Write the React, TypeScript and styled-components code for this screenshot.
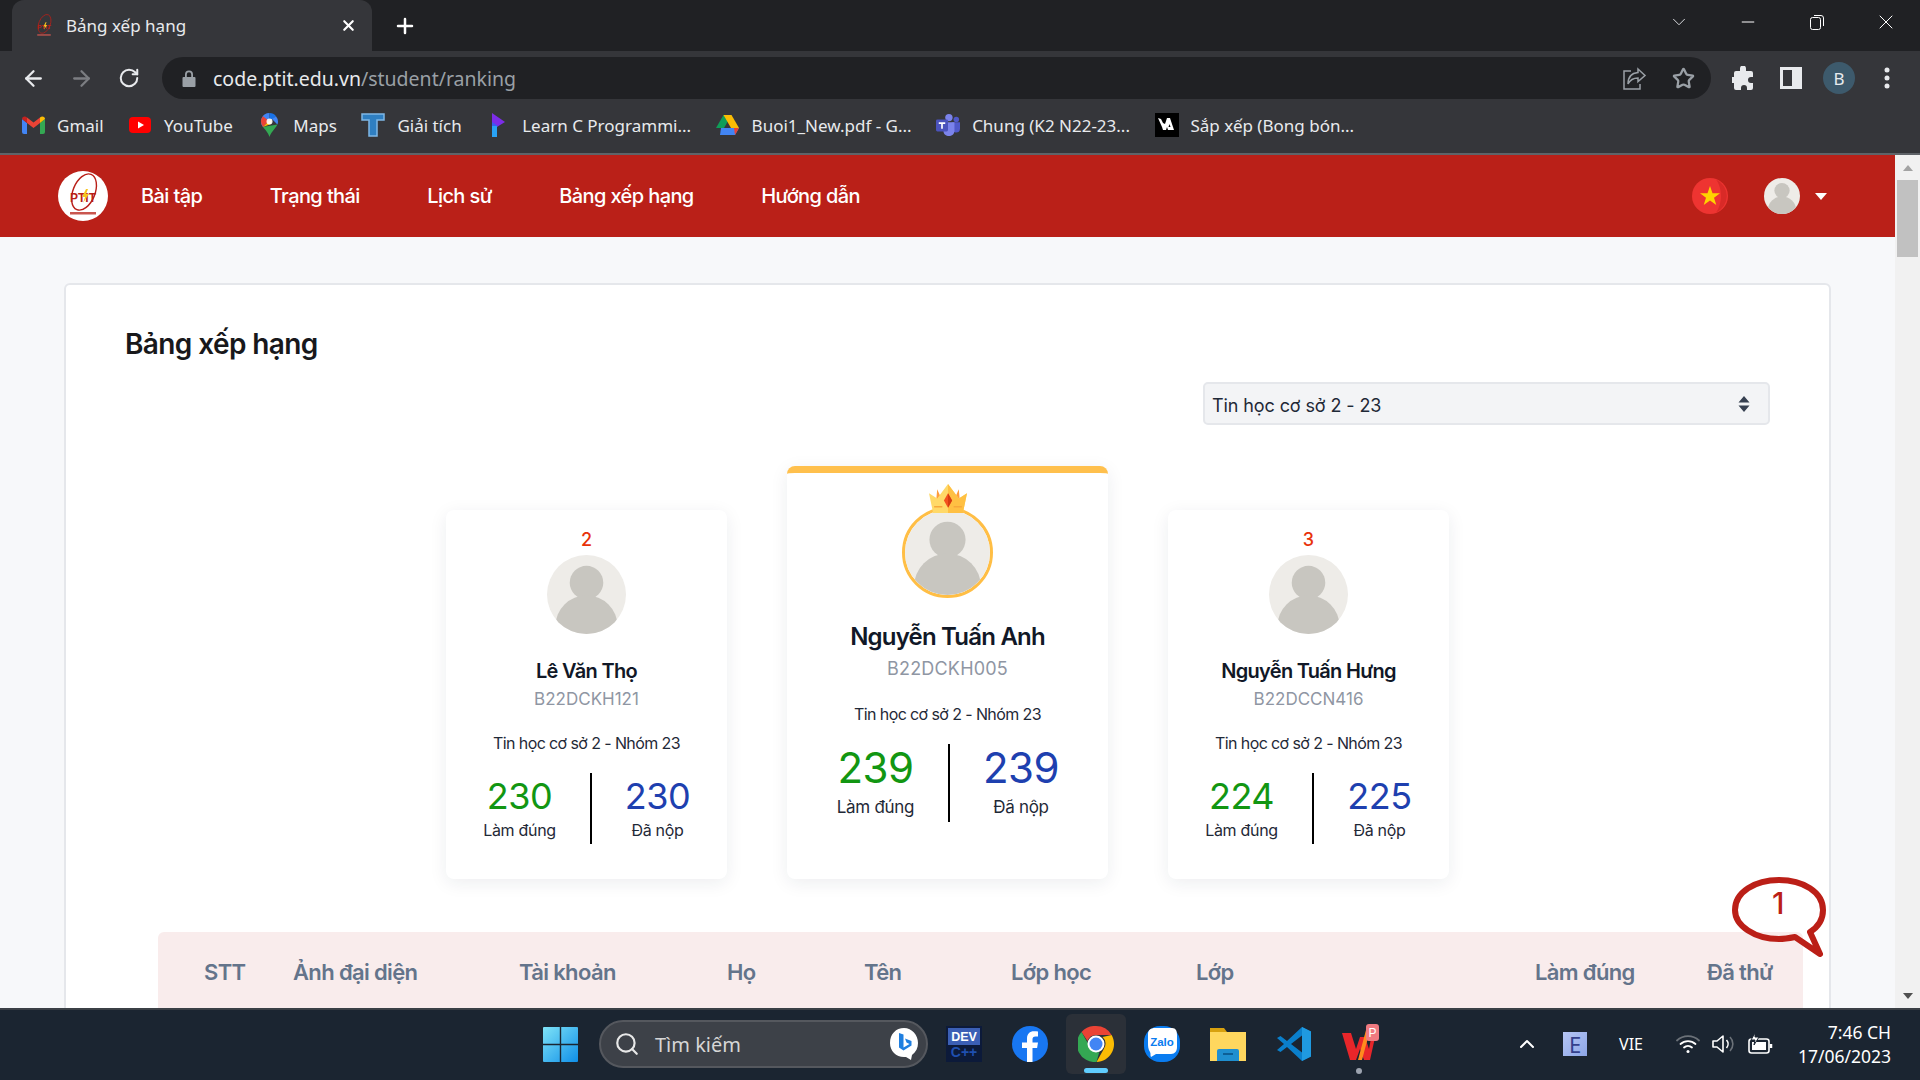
import styled, { createGlobalStyle } from 'styled-components'
import { ArrowLeft, ArrowRight, RotateCw, X, Plus, ChevronDown, Minus, Star, ChevronUp, Search } from 'lucide-react'

const GlobalStyle = createGlobalStyle`
    html,
    body {
        margin: 0;
        padding: 0;
        overflow: hidden;
    }
    * {
        box-sizing: border-box;
    }
`

const bookmarks = [
    { name: 'Gmail', icon: <GmailIcon /> },
    { name: 'YouTube', icon: <YoutubeIcon /> },
    { name: 'Maps', icon: <MapsIcon /> },
    { name: 'Giải tích', icon: <TIcon /> },
    { name: 'Learn C Programmi...', icon: <LearnIcon /> },
    { name: 'Buoi1_New.pdf - G...', icon: <DriveIcon /> },
    { name: 'Chung (K2 N22-23...', icon: <TeamsIcon /> },
    { name: 'Sắp xếp (Bong bón...', icon: <VaIcon /> },
]

const navItems = ['Bài tập', 'Trạng thái', 'Lịch sử', 'Bảng xếp hạng', 'Hướng dẫn']

const columns = [
    { title: 'STT', width: 89 },
    { title: 'Ảnh đại diện', width: 226 },
    { title: 'Tài khoản', width: 208 },
    { title: 'Họ', width: 137 },
    { title: 'Tên', width: 147 },
    { title: 'Lớp học', width: 185 },
    { title: 'Lớp', width: 339 },
    { title: 'Làm đúng', width: 172 },
    { title: 'Đã thử', width: 80 },
]

const runnersUp = {
    second: { rank: 2, name: 'Lê Văn Thọ', code: 'B22DCKH121', correct: 230, submitted: 230 },
    third: { rank: 3, name: 'Nguyễn Tuấn Hưng', code: 'B22DCCN416', correct: 224, submitted: 225 },
}

function PtitLogo({ size }: { size: number }) {
    return (
        <svg width={size} height={size} viewBox="0 0 50 50">
            <ellipse cx="26" cy="21" rx="11" ry="19" transform="rotate(22 26 21)" fill="none" stroke="#b91f18" strokeWidth="1.4" />
            <text x="25" y="31" textAnchor="middle" fontFamily="Liberation Sans, sans-serif" fontSize="12" fontWeight="700" fill="#b91f18">
                PTIT
            </text>
            <path d="M28 18l-4 8h3l-2 6 6-9h-3l2-5z" fill="#f7c520" />
            <rect x="12" y="41" width="26" height="2.5" fill="#c9564f" />
        </svg>
    )
}

function GmailIcon() {
    return (
        <svg width="23" height="18" viewBox="0 0 23 18">
            <path d="M0 3v13a2 2 0 002 2h3V7z" fill="#4285f4" />
            <path d="M23 3v13a2 2 0 01-2 2h-3V7z" fill="#34a853" />
            <path d="M5 7l6.500 5L18 7V1.500l-6.500 5-6.500-5z" fill="#ea4335" />
            <path d="M0 3c0-2.500 3-3.500 5-1.500V7L0 3z" fill="#c5221f" />
            <path d="M23 3c0-2.500-3-3.500-5-1.500V7l5-4z" fill="#fbbc04" />
        </svg>
    )
}

function YoutubeIcon() {
    return (
        <svg width="22" height="16" viewBox="0 0 22 16">
            <rect width="22" height="16" rx="4" fill="#f00" />
            <path d="M9 4.500L15 8l-6 3.500z" fill="#fff" />
        </svg>
    )
}

function MapsIcon() {
    return (
        <svg width="17" height="24" viewBox="0 0 17 24">
            <path d="M8.500 0A8.500 8.500 0 002 14l6.500-7z" fill="#4285f4" />
            <path d="M8.500 0c2.500 0 5 1.200 6.500 3.200L8.500 9z" fill="#1a73e8" />
            <path d="M2 14a8.500 8.500 0 01-2-5.500c0-2 .7-3.900 2-5.300L8 8z" fill="#ea4335" />
            <path d="M15 3.200A8.500 8.500 0 0117 8.500c0 1-.2 2-.6 3L11 6z" fill="#4285f4" />
            <path d="M2 14c2 2.800 5 5 6.500 10 1.500-5 5-7 7.900-12.500L2 14z" fill="#34a853" />
            <path d="M2 14l6-6 3-2-1 5z" fill="#fbbc04" />
            <circle cx="8.500" cy="8.500" r="3" fill="#fff" opacity="0.9" />
        </svg>
    )
}

function TIcon() {
    return (
        <svg width="24" height="24" viewBox="0 0 24 24">
            <path d="M1 1h22v6h-7v16H8V7H1z" fill="#2f7fc1" stroke="#7fb8e6" strokeWidth="1.500" />
        </svg>
    )
}

function LearnIcon() {
    return (
        <svg width="16" height="24" viewBox="0 0 16 24">
            <path d="M2 0l13 9-13 8z" fill="#7c2de8" />
            <path d="M2 9l6 4-6 3z" fill="#3b5bf0" />
            <path d="M2 13h5v11H2z" fill="#29a3f5" />
        </svg>
    )
}

function DriveIcon() {
    return (
        <svg width="23" height="20" viewBox="0 0 23 20">
            <path d="M7.500 0h8L8 13H0z" fill="#0f9d58" />
            <path d="M15.500 0L23 13h-8L7.500 0z" fill="#fbbc04" />
            <path d="M5 13h18l-4 7H4z" fill="#4285f4" />
            <path d="M19 20l4-7h-5z" fill="#ea4335" />
        </svg>
    )
}

function TeamsIcon() {
    return (
        <svg width="26" height="24" viewBox="0 0 26 24">
            <circle cx="14" cy="4" r="4" fill="#7b83eb" />
            <circle cx="22" cy="6" r="3" fill="#5059c9" />
            <path d="M17 9h9v7c0 3-2 4-4 4s-5-1-5-4z" fill="#5059c9" />
            <path d="M8 9h12v9c0 4-3 6-6 6s-6-2-6-6z" fill="#7b83eb" />
            <rect y="6" width="13" height="13" rx="1.500" fill="#4b53bc" />
            <path d="M3 9h7v1.800H7.400V16H5.600v-5.200H3z" fill="#fff" />
        </svg>
    )
}

function VaIcon() {
    return (
        <svg width="24" height="24" viewBox="0 0 24 24">
            <rect width="24" height="24" fill="#000" />
            <path d="M3 5l4 9 1 3h3l1-3 1 3h6l-1-3-3-9h-3l-2 6-2-1-2-4z" fill="#fff" />
            <path d="M14.500 11l1 3h-2z" fill="#000" />
        </svg>
    )
}

function WindowsIcon() {
    return (
        <svg width="35" height="35" viewBox="0 0 35 35">
            <defs>
                <linearGradient id="win" x1="0" y1="0" x2="1" y2="1">
                    <stop offset="0" stopColor="#7fe3f7" />
                    <stop offset="1" stopColor="#0f8fe8" />
                </linearGradient>
            </defs>
            <path d="M0 1a1 1 0 011-1h15.800v16.800H0zM18.200 0H34a1 1 0 011 1v15.800H18.200zM0 18.200h16.800V35H1a1 1 0 01-1-1zM18.200 18.200H35V34a1 1 0 01-1 1H18.200z" fill="url(#win)" />
        </svg>
    )
}

function BingIcon() {
    return (
        <svg width="30" height="34" viewBox="0 0 30 34">
            <path d="M15 1c8 0 14 7 14 15 0 5-2 9-6 12l-1 5-5-3c-1 0-1 0-2 0C7 30 1 24 1 16 1 7 7 1 15 1z" fill="#fff" />
            <path d="M10 6l4.500 1.500v13l6-3.500-3-1.500-1.500-4 6.500 2.500v4.500l-8 5-4.500-3z" fill="#1f7fe0" />
        </svg>
    )
}

function DevCppIcon() {
    return (
        <svg width="36" height="36" viewBox="0 0 36 36">
            <rect width="36" height="36" fill="#0c1a3a" />
            <rect x="2" y="2" width="32" height="17" fill="#3b5fb5" />
            <text x="18" y="15" textAnchor="middle" fontFamily="Liberation Sans, sans-serif" fontWeight="700" fontSize="12.500" fill="#fff">
                DEV
            </text>
            <text x="18" y="31" textAnchor="middle" fontFamily="Liberation Sans, sans-serif" fontWeight="700" fontSize="14" fill="#1f4fb0">
                C++
            </text>
        </svg>
    )
}

function FacebookIcon() {
    return (
        <svg width="36" height="36" viewBox="0 0 36 36">
            <circle cx="18" cy="18" r="18" fill="#1877f2" />
            <path d="M20.500 36V22h4.600l.9-5.500h-5.500v-3.200c0-1.700.8-2.900 3-2.900H26V5.600c-1-.1-2.500-.3-4-.3-4.300 0-7 2.600-7 7.200v4H10V22h5v14z" fill="#fff" />
        </svg>
    )
}

function ChromeIcon() {
    return (
        <svg width="36" height="36" viewBox="0 0 36 36">
            <path d="M18 0a18 18 0 0115.600 9H18a9 9 0 00-8.500 6L3.500 6A18 18 0 0118 0z" fill="#ea4335" />
            <path d="M33.600 9A18 18 0 0118.500 36l7.300-13A9 9 0 0024.500 11z" fill="#fbbc04" />
            <path d="M18.500 36A18 18 0 013.500 6l6.800 12a9 9 0 0011 8z" fill="#34a853" />
            <circle cx="18" cy="18" r="8.500" fill="#fff" />
            <circle cx="18" cy="18" r="6.500" fill="#4285f4" />
        </svg>
    )
}

function ZaloIcon() {
    return (
        <svg width="36" height="36" viewBox="0 0 36 36">
            <rect width="36" height="36" rx="16" fill="#0a7cf0" />
            <path d="M4 8C4 4 7 2 11 2h17c4 0 5 3 5 7v12c0 4-2 7-6 7H12l-5 3c-1-2 0-3-1-5-2-3-2-6-2-9z" fill="#fff" />
            <text x="18" y="20" textAnchor="middle" fontFamily="Liberation Sans, sans-serif" fontWeight="700" fontSize="11.500" fill="#0a7cf0">
                Zalo
            </text>
        </svg>
    )
}

function FolderIcon() {
    return (
        <svg width="36" height="36" viewBox="0 0 36 36">
            <path d="M0 2h14l3 4h19v4H0z" fill="#d8a10f" />
            <path d="M0 6h36v29H0z" fill="#ffd75e" />
            <path d="M7 35V25a2 2 0 012-2h18a2 2 0 012 2v10z" fill="#1f8fd0" />
            <rect x="13" y="27" width="10" height="2" fill="#0d5f96" />
        </svg>
    )
}

function VscodeIcon() {
    return (
        <svg width="36" height="36" viewBox="0 0 36 36">
            <path d="M26 1l9 4.500v25L26 35 11 21l-6.500 5L1 24l7-6-7-6 3.500-2L11 15z" fill="#0a7fcb" />
            <path d="M26 9.500L15 18l11 8.500z" fill="#1a2430" />
            <path d="M26 1l9 4.500v25L26 35z" fill="#1f9ae0" />
        </svg>
    )
}

function WpsIcon() {
    return (
        <svg width="40" height="40" viewBox="0 0 40 40">
            <path d="M2 9h9l5 16 4-12h5l4 12 3-16h4l-6 27h-6l-4-11-4 11h-6z" fill="#e8262a" />
            <path d="M18 36l8-30h4l-8 30z" fill="#ff8a1e" />
            <rect x="26" y="0" width="13" height="17" rx="3" fill="#ef7a80" />
            <text x="32.500" y="13" textAnchor="middle" fontFamily="Liberation Sans, sans-serif" fontSize="12" fill="#fff">
                P
            </text>
        </svg>
    )
}

function DefaultAvatar({ size }: { size: number }) {
    return (
        <svg width={size} height={size} viewBox="0 0 80 80">
            <defs>
                <clipPath id="avatar-clip">
                    <circle cx="40" cy="40" r="40" />
                </clipPath>
            </defs>
            <circle cx="40" cy="40" r="40" fill="#eeece8" />
            <g clipPath="url(#avatar-clip)" fill="#c8c6c0">
                <circle cx="40" cy="28" r="17" />
                <ellipse cx="40" cy="72" rx="31.500" ry="31" />
            </g>
        </svg>
    )
}

function CrownIcon() {
    return (
        <svg width="38" height="29" viewBox="0 0 37 28">
            <path d="M8 5l4 9-5 2zM29 5l-4 9 5 2z" fill="#ff9d3b" />
            <path d="M0 9l8 5 10.500-14L29 14l8-5-4 19H4z" fill="#ffd968" />
            <path d="M18.500 0L29 14l8-5-4 19H18.500z" fill="#ffc043" />
            <path d="M5 22h8M24 22h8" stroke="#f7a83a" strokeWidth="1.500" />
            <path d="M18.500 9l4 7-4 7-4-7z" fill="#f4511e" />
            <path d="M18.500 9l4 7-4 7z" fill="#d63c10" />
        </svg>
    )
}

function Podium({ rank, name, code, correct, submitted }: { rank: number; name: string; code: string; correct: number; submitted: number }) {
    return (
        <SideCard>
            <Rank>{rank}</Rank>
            <DefaultAvatar size={79} />
            <SideName>{name}</SideName>
            <SideCode>{code}</SideCode>
            <SideClass>Tin học cơ sở 2 - Nhóm 23</SideClass>
            <Stats $columns="140px 134px">
                <Stat>
                    <StatValue $size={36} $color="#129612">
                        {correct}
                    </StatValue>
                    <StatLabel>Làm đúng</StatLabel>
                </Stat>
                <Stat>
                    <StatValue $size={36} $color="#1e40af">
                        {submitted}
                    </StatValue>
                    <StatLabel>Đã nộp</StatLabel>
                </Stat>
            </Stats>
        </SideCard>
    )
}

const App = () => {
    return (
        <Screen>
            <GlobalStyle />
            <TabStrip>
                <Tab>
                    <PtitLogo size={26} />
                    <TabTitle>Bảng xếp hạng</TabTitle>
                    <X size={17} strokeWidth={3} color="#fff" />
                </Tab>
                <NewTab>
                    <Plus size={24} strokeWidth={2.5} color="#fff" />
                </NewTab>
                <WindowControls>
                    <WindowControl>
                        <ChevronDown size={22} strokeWidth={1} color="#e8eaed" />
                    </WindowControl>
                    <WindowControl>
                        <Minus size={20} strokeWidth={1.2} color="#fff" />
                    </WindowControl>
                    <WindowControl>
                        <svg width="16" height="16" viewBox="0 0 16 16" fill="none" stroke="#fff">
                            <rect x="1.500" y="3.500" width="10" height="12" rx="2" />
                            <path d="M5 1.500h7a2.500 2.500 0 012.500 2.500v8" />
                        </svg>
                    </WindowControl>
                    <WindowControl>
                        <X size={24} strokeWidth={1} color="#fff" />
                    </WindowControl>
                </WindowControls>
            </TabStrip>
            <Toolbar>
                <ToolButton>
                    <ArrowLeft size={25} strokeWidth={2.2} color="#e8eaed" />
                </ToolButton>
                <ToolButton>
                    <ArrowRight size={25} strokeWidth={2.2} color="#7c7e82" />
                </ToolButton>
                <ToolButton>
                    <RotateCw size={22} strokeWidth={2.2} color="#e8eaed" />
                </ToolButton>
                <Omnibox>
                    <svg width="14" height="17" viewBox="0 0 14 17">
                        <path d="M3 7V4.500a4 4 0 018 0V7h1.500a1 1 0 011 1v8a1 1 0 01-1 1h-11a1 1 0 01-1-1V8a1 1 0 011-1zM4.800 7h4.400V4.500a2.200 2.200 0 00-4.400 0z" fill="#9aa0a6" />
                    </svg>
                    <Url>
                        code.ptit.edu.vn<UrlPath>/student/ranking</UrlPath>
                    </Url>
                    <OmniActions>
                        <svg width="24" height="26" viewBox="0 0 24 26" fill="none" stroke="#9aa0a6" strokeWidth="1.500">
                            <path d="M15 4l7 6.500-7 6V13c-5 0-8 2-10 6 0-7 4-11 10-11.500z" />
                            <path d="M8 6H1v18h16v-5" />
                        </svg>
                        <Star size={23} strokeWidth={2.4} color="#9aa0a6" />
                    </OmniActions>
                </Omnibox>
                <ToolGroup>
                    <ToolButton>
                        <svg width="22" height="24" viewBox="0 0 22 24">
                            <path d="M8 2.500a3 3 0 016 0V5h5a2 2 0 012 2v4h-2a3 3 0 000 6h2v5a2 2 0 01-2 2h-4v-2a3 3 0 00-6 0v2H4a2 2 0 01-2-2v-5H0v-6h2V7a2 2 0 012-2h4z" fill="#e8eaed" />
                        </svg>
                    </ToolButton>
                    <ToolButton>
                        <svg width="22" height="22" viewBox="0 0 22 22">
                            <path d="M0 0h22v22H0zM3 3v16h9V3z" fill="#e8eaed" fillRule="evenodd" />
                        </svg>
                    </ToolButton>
                    <ProfileBadge>B</ProfileBadge>
                    <ToolButton>
                        <svg width="6" height="24" viewBox="0 0 6 24" fill="#e8eaed">
                            <circle cx="3" cy="4" r="2.500" />
                            <circle cx="3" cy="12" r="2.500" />
                            <circle cx="3" cy="20" r="2.500" />
                        </svg>
                    </ToolButton>
                </ToolGroup>
            </Toolbar>
            <BookmarkBar>
                {bookmarks.map((item) => (
                    <Bookmark key={item.name}>
                        <BookmarkIcon>{item.icon}</BookmarkIcon>
                        <span>{item.name}</span>
                    </Bookmark>
                ))}
            </BookmarkBar>
            <Viewport>
                <Page>
                    <Header>
                        <LogoBadge>
                            <PtitLogo size={50} />
                        </LogoBadge>
                        <Nav>
                            {navItems.map((item) => (
                                <NavItem key={item}>{item}</NavItem>
                            ))}
                        </Nav>
                        <HeaderRight>
                            <svg width="36" height="36" viewBox="0 0 36 36">
                                <circle cx="18" cy="18" r="18" fill="#ee3431" />
                                <path d="M24 1.500a18 18 0 010 33c3-4 5-10 5-16.500S27 5.500 24 1.500z" fill="#d92a27" />
                                <path d="M18 8l2.500 7.200H28l-6 4.500 2.300 7.300-6.300-4.500-6.300 4.500 2.300-7.300-6-4.500h7.500z" fill="#ffd400" />
                            </svg>
                            <UserMenu>
                                <DefaultAvatar size={36} />
                                <Caret />
                            </UserMenu>
                        </HeaderRight>
                    </Header>
                    <Content>
                        <Panel>
                            <Title>Bảng xếp hạng</Title>
                            <SelectRow>
                                <CourseSelect>
                                    <SelectValue>Tin học cơ sở 2 - 23</SelectValue>
                                    <svg width="12" height="16" viewBox="0 0 12 16" fill="#374151">
                                        <path d="M6 0l5.500 6.500H.5zM6 16L.5 9.500h11z" />
                                    </svg>
                                </CourseSelect>
                            </SelectRow>
                            <PodiumRow>
                                <Podium {...runnersUp.second} />
                                <TopCard>
                                    <AvatarRing>
                                        <CrownSlot>
                                            <CrownIcon />
                                        </CrownSlot>
                                        <DefaultAvatar size={85} />
                                    </AvatarRing>
                                    <TopName>Nguyễn Tuấn Anh</TopName>
                                    <TopCode>B22DCKH005</TopCode>
                                    <TopClass>Tin học cơ sở 2 - Nhóm 23</TopClass>
                                    <Stats $columns="145px 144px">
                                        <TopStat>
                                            <StatValue $size={42} $color="#129612">
                                                239
                                            </StatValue>
                                            <TopStatLabel>Làm đúng</TopStatLabel>
                                        </TopStat>
                                        <TopStat>
                                            <StatValue $size={42} $color="#1e40af">
                                                239
                                            </StatValue>
                                            <TopStatLabel>Đã nộp</TopStatLabel>
                                        </TopStat>
                                    </Stats>
                                </TopCard>
                                <Podium {...runnersUp.third} />
                            </PodiumRow>
                            <TableHead>
                                {columns.map((col) => (
                                    <HeadCell key={col.title} $width={col.width}>
                                        {col.title}
                                    </HeadCell>
                                ))}
                            </TableHead>
                            <Bubble>
                                <svg width="94" height="80" viewBox="0 0 94 80">
                                    <path
                                        d="M47 3c24 0 44 12 44 30 0 9-5 17-13 22l10 22-25-17c-5 1-11 2-16 2C23 62 3 49 3 33 3 15 23 3 47 3z"
                                        fill="none"
                                        stroke="#bb1f17"
                                        strokeWidth="6"
                                        strokeLinejoin="round"
                                    />
                                </svg>
                                <BubbleText>1</BubbleText>
                            </Bubble>
                        </Panel>
                    </Content>
                </Page>
                <Scrollbar>
                    <ScrollButton $up />
                    <ScrollThumb />
                    <ScrollButton />
                </Scrollbar>
            </Viewport>
            <Taskbar>
                <WindowsIcon />
                <SearchPill>
                    <Search size={26} strokeWidth={2} color="#e8e8e8" />
                    <SearchText>Tìm kiếm</SearchText>
                    <BingIcon />
                </SearchPill>
                <TaskApps>
                    <TaskApp>
                        <DevCppIcon />
                    </TaskApp>
                    <TaskApp>
                        <FacebookIcon />
                    </TaskApp>
                    <TaskApp $active>
                        <ChromeIcon />
                        <ActiveMark />
                    </TaskApp>
                    <TaskApp>
                        <ZaloIcon />
                    </TaskApp>
                    <TaskApp>
                        <FolderIcon />
                    </TaskApp>
                    <TaskApp>
                        <VscodeIcon />
                    </TaskApp>
                    <TaskApp>
                        <WpsIcon />
                        <RunningDot />
                    </TaskApp>
                </TaskApps>
                <Tray>
                    <ChevronUp size={24} strokeWidth={2} color="#fff" />
                    <EvKeyIcon>E</EvKeyIcon>
                    <Lang>VIE</Lang>
                    <TrayIcons>
                        <svg width="24" height="20" viewBox="0 0 24 20" fill="none" stroke="#fff" strokeWidth="1.800" strokeLinecap="round">
                            <path d="M1 6.500a16 16 0 0122 0" stroke="#6b7178" />
                            <path d="M4.500 10a11 11 0 0115 0M8 13.500a6 6 0 018 0" />
                            <circle cx="12" cy="17.500" r="1.500" fill="#fff" stroke="none" />
                        </svg>
                        <svg width="24" height="22" viewBox="0 0 24 22" fill="none" stroke="#fff" strokeWidth="1.600">
                            <path d="M1 8h4l6-5v16l-6-5H1z" strokeLinejoin="round" />
                            <path d="M14.500 7a6 6 0 010 8" />
                            <path d="M18 4a10 10 0 010 14" stroke="#6b7178" />
                        </svg>
                        <svg width="25" height="22" viewBox="0 0 25 22" fill="none" stroke="#fff" strokeWidth="1.600">
                            <rect x="1" y="6" width="20" height="14" rx="2.500" />
                            <rect x="4" y="9" width="14" height="8" fill="#fff" stroke="none" />
                            <path d="M23 11v4" strokeWidth="2.500" />
                            <path d="M7 0L3 7h4l-1 5 5-8H7z" fill="#fff" stroke="#1b2531" strokeWidth="1" />
                        </svg>
                    </TrayIcons>
                    <Clock>
                        <span>7:46 CH</span>
                        <span>17/06/2023</span>
                    </Clock>
                </Tray>
            </Taskbar>
        </Screen>
    )
}

export default App

const chromeFont = `'Noto Sans', 'Open Sans', sans-serif`
const pageFont = `Inter, 'Noto Sans', sans-serif`

const Screen = styled.div`
    width: 1920px;
    height: 1080px;
    display: flex;
    flex-direction: column;
    overflow: hidden;
    font-family: ${chromeFont};
`

const TabStrip = styled.div`
    flex: 0 0 51px;
    display: flex;
    align-items: stretch;
    padding-left: 12px;
    background: #202124;
`

const Tab = styled.div`
    width: 360px;
    display: flex;
    align-items: center;
    padding: 0 15px 0 19px;
    border-radius: 12px 12px 0 0;
    background: #35363a;
`

const TabTitle = styled.span`
    flex: 1;
    margin-left: 9px;
    font-size: 17px;
    color: #e8eaed;
`

const NewTab = styled.div`
    width: 34px;
    margin-left: 16px;
    display: flex;
    align-items: center;
    justify-content: center;
`

const WindowControls = styled.div`
    margin-left: auto;
    display: flex;
    align-items: center;
`

const WindowControl = styled.div`
    width: 69px;
    height: 30px;
    margin-top: -8px;
    display: flex;
    align-items: center;
    justify-content: center;
`

const Toolbar = styled.div`
    flex: 0 0 51px;
    display: flex;
    align-items: center;
    gap: 16px;
    padding: 3px 17px 0;
    background: #35363a;
`

const ToolButton = styled.div`
    width: 32px;
    height: 32px;
    display: flex;
    align-items: center;
    justify-content: center;
`

const ToolGroup = styled.div`
    display: flex;
    align-items: center;
    gap: 16px;
`

const Omnibox = styled.div`
    flex: 1;
    height: 42px;
    margin-left: 1px;
    display: flex;
    align-items: center;
    padding: 0 16px 0 20px;
    border-radius: 21px;
    background: #202124;
`

const Url = styled.span`
    margin-left: 17px;
    font-size: 19.5px;
    color: #e8eaed;
`

const UrlPath = styled.span`
    color: #9aa0a6;
`

const OmniActions = styled.div`
    margin-left: auto;
    display: flex;
    align-items: center;
    gap: 25px;
`

const ProfileBadge = styled.div`
    width: 32px;
    height: 32px;
    display: flex;
    align-items: center;
    justify-content: center;
    border-radius: 50%;
    font-size: 17px;
    color: #e8eaed;
    background: #3d5a6c;
`

const BookmarkBar = styled.div`
    flex: 0 0 53px;
    display: flex;
    align-items: center;
    gap: 24.5px;
    padding: 0 0 5px 21px;
    border-bottom: 2px solid #5f6368;
    background: #35363a;
`

const Bookmark = styled.div`
    display: flex;
    align-items: center;
    gap: 12px;
    font-size: 17px;
    color: #e8eaed;
`

const BookmarkIcon = styled.span`
    width: 24px;
    display: flex;
    justify-content: center;
`

const Viewport = styled.div`
    flex: 1;
    min-height: 0;
    display: flex;
`

const Page = styled.div`
    flex: 1;
    min-width: 0;
    overflow: hidden;
    background: #f7f8fa;
    font-family: ${pageFont};
`

const Header = styled.header`
    height: 82px;
    display: flex;
    align-items: center;
    padding: 0 68px 0 58px;
    background: #ba2018;
`

const LogoBadge = styled.div`
    width: 50px;
    height: 50px;
    border-radius: 50%;
    background: #fff;
`

const Nav = styled.nav`
    display: flex;
    gap: 67.5px;
    margin-left: 33px;
`

const NavItem = styled.a`
    font-size: 20px;
    font-weight: 500;
    letter-spacing: -0.6px;
    color: #fff;
`

const HeaderRight = styled.div`
    margin-left: auto;
    display: flex;
    align-items: center;
    gap: 36px;
`

const UserMenu = styled.div`
    display: flex;
    align-items: center;
    gap: 15px;
`

const Caret = styled.div`
    width: 0;
    height: 0;
    border-left: 6px solid transparent;
    border-right: 6px solid transparent;
    border-top: 7px solid #fff;
`

const Content = styled.main`
    padding: 46px 64px 0;
`

const Panel = styled.section`
    position: relative;
    height: 800px;
    padding: 0 60px;
    border: 2px solid #e5e7eb;
    border-radius: 6px;
    background: #fff;
`

const Title = styled.h1`
    margin: 0 0 0 -1px;
    padding-top: 42px;
    font-size: 28px;
    line-height: 34px;
    font-weight: 600;
    letter-spacing: -0.6px;
    color: #18181b;
`

const SelectRow = styled.div`
    display: flex;
    justify-content: flex-end;
    margin: 21px -1px 0 0;
`

const CourseSelect = styled.div`
    width: 567px;
    height: 43px;
    display: flex;
    align-items: center;
    justify-content: space-between;
    padding: 0 18px 0 7px;
    border: 2px solid #e5e7eb;
    border-radius: 5px;
    font-size: 18px;
    color: #1f2937;
    background: #f3f4f6;
`

const SelectValue = styled.span`
    padding-top: 3px;
    letter-spacing: -0.1px;
`

const PodiumRow = styled.div`
    display: flex;
    align-items: flex-end;
    justify-content: center;
    gap: 60px;
    margin-top: 41px;
`

const SideCard = styled.article`
    width: 281px;
    height: 369px;
    display: flex;
    flex-direction: column;
    align-items: center;
    padding-top: 17px;
    border-radius: 8px;
    background: #fff;
    box-shadow: 0 4px 18px rgba(30, 41, 59, 0.08);
`

const TopCard = styled.article`
    width: 321px;
    height: 413px;
    display: flex;
    flex-direction: column;
    align-items: center;
    padding-top: 34px;
    border-top: 7px solid #ffc04d;
    border-radius: 8px;
    background: #fff;
    box-shadow: 0 4px 18px rgba(30, 41, 59, 0.08);
`

const Rank = styled.div`
    margin-top: -1px;
    margin-bottom: 1px;
    font-size: 18px;
    line-height: 28px;
    font-weight: 500;
    color: #e8320a;
`

const SideName = styled.div`
    margin-top: 23px;
    font-size: 20px;
    line-height: 28px;
    font-weight: 600;
    letter-spacing: -0.7px;
    color: #111827;
`

const SideCode = styled.div`
    margin-top: 2px;
    font-size: 17px;
    line-height: 24px;
    color: #8f96a3;
`

const SideClass = styled.div`
    margin-top: 20px;
    font-size: 16px;
    line-height: 24px;
    letter-spacing: -0.6px;
    color: #1f2937;
`

const TopName = styled(SideName)`
    margin-top: 22px;
    font-size: 24px;
    line-height: 34px;
    letter-spacing: -0.8px;
`

const TopCode = styled(SideCode)`
    margin-top: 2px;
    font-size: 18px;
    line-height: 26px;
    letter-spacing: 0.2px;
`

const TopClass = styled(SideClass)`
    margin-top: 20px;
`

const AvatarRing = styled.div`
    position: relative;
    width: 91px;
    height: 91px;
    display: flex;
    align-items: center;
    justify-content: center;
    border: 3px solid #ffbe45;
    border-radius: 50%;
`

const CrownSlot = styled.div`
    position: absolute;
    top: -26px;
    left: 24px;
    width: 38px;
    height: 29px;
    z-index: 1;
`

const Stats = styled.div<{ $columns: string }>`
    display: grid;
    grid-template-columns: ${(props) => props.$columns};
    margin-top: 18px;
`

const Stat = styled.div`
    display: flex;
    flex-direction: column;
    align-items: center;
    padding: 2px 0;

    & + & {
        border-left: 2px solid #000;
    }
`

const TopStat = styled(Stat)`
    padding: 0 0 3px;
`

const StatValue = styled.div<{ $size: number; $color: string }>`
    font-size: ${(props) => props.$size}px;
    line-height: ${(props) => props.$size + 6}px;
    letter-spacing: -0.5px;
    color: ${(props) => props.$color};
`

const StatLabel = styled.div`
    margin-top: 1px;
    font-size: 16px;
    line-height: 24px;
    letter-spacing: -0.3px;
    color: #1f2937;
`

const TopStatLabel = styled(StatLabel)`
    margin-top: 3px;
    font-size: 17px;
`

const TableHead = styled.div`
    display: flex;
    align-items: center;
    height: 82px;
    margin: 53px -34px 0 32px;
    padding: 0 0 2px 46px;
    border-radius: 6px 6px 0 0;
    background: #f9ecec;
`

const HeadCell = styled.div<{ $width: number }>`
    flex: 0 0 ${(props) => props.$width}px;
    font-size: 22px;
    font-weight: 600;
    letter-spacing: -0.65px;
    white-space: nowrap;
    color: #64748b;
`

const Bubble = styled.div`
    position: absolute;
    top: 592px;
    right: 3px;
    width: 94px;
    height: 80px;
`

const BubbleText = styled.span`
    position: absolute;
    top: 4px;
    left: 40px;
    font-size: 30px;
    line-height: 44px;
    font-weight: 500;
    color: #bb1f17;
`

const Scrollbar = styled.aside`
    flex: 0 0 25px;
    display: flex;
    flex-direction: column;
    align-items: center;
    background: #f1f1f1;
`

const ScrollButton = styled.div<{ $up?: boolean }>`
    flex: 0 0 25px;
    width: 25px;
    display: flex;
    align-items: center;
    justify-content: center;
    margin-top: ${(props) => (props.$up ? '0' : 'auto')};

    &::after {
        content: '';
        width: 0;
        height: 0;
        border-left: 5px solid transparent;
        border-right: 5px solid transparent;
        border-bottom: ${(props) => (props.$up ? '6px solid #a3a3a3' : '0')};
        border-top: ${(props) => (props.$up ? '0' : '6px solid #505050')};
    }
`

const ScrollThumb = styled.div`
    width: 21px;
    flex: 0 0 77px;
    background: #c1c1c1;
`

const Taskbar = styled.footer`
    flex: 0 0 72px;
    display: flex;
    align-items: center;
    padding: 0 29px 2px 543px;
    border-top: 2px solid #3b4046;
    background: #1b2531;
`

const SearchPill = styled.div`
    width: 329px;
    height: 48px;
    margin-left: 21px;
    display: flex;
    align-items: center;
    padding: 0 7px 0 13px;
    border: 2px solid #55585e;
    border-radius: 24px;
    background: #3d4148;
`

const SearchText = styled.span`
    flex: 1;
    margin-left: 15px;
    font-size: 20px;
    color: #d6d6d6;
`

const TaskApps = styled.div`
    display: flex;
    gap: 6px;
    margin-left: 6px;
`

const TaskApp = styled.div<{ $active?: boolean }>`
    position: relative;
    width: 60px;
    height: 60px;
    display: flex;
    align-items: center;
    justify-content: center;
    border-radius: 6px;
    background: ${(props) => (props.$active ? '#2b3038' : 'transparent')};
`

const ActiveMark = styled.span`
    position: absolute;
    bottom: 1px;
    left: 18px;
    width: 24px;
    height: 5px;
    border-radius: 3px;
    background: #60cdff;
`

const RunningDot = styled.span`
    position: absolute;
    bottom: 0;
    left: 26px;
    width: 6px;
    height: 6px;
    border-radius: 50%;
    background: #9ca3af;
`

const Tray = styled.div`
    margin-left: auto;
    display: flex;
    align-items: center;
    color: #fff;
`

const EvKeyIcon = styled.div`
    width: 24px;
    height: 24px;
    margin-left: 24px;
    display: flex;
    align-items: center;
    justify-content: center;
    font-size: 22px;
    line-height: 24px;
    color: #33408c;
    background: linear-gradient(135deg, #b6c6f5, #8da6e6);
`

const Lang = styled.div`
    margin-left: 32px;
    font-size: 16px;
`

const TrayIcons = styled.div`
    display: flex;
    align-items: center;
    gap: 12px;
    margin-left: 33px;
`

const Clock = styled.div`
    width: 98px;
    margin-left: 20px;
    display: flex;
    flex-direction: column;
    align-items: flex-end;
    font-size: 17.5px;
    line-height: 24px;
`
